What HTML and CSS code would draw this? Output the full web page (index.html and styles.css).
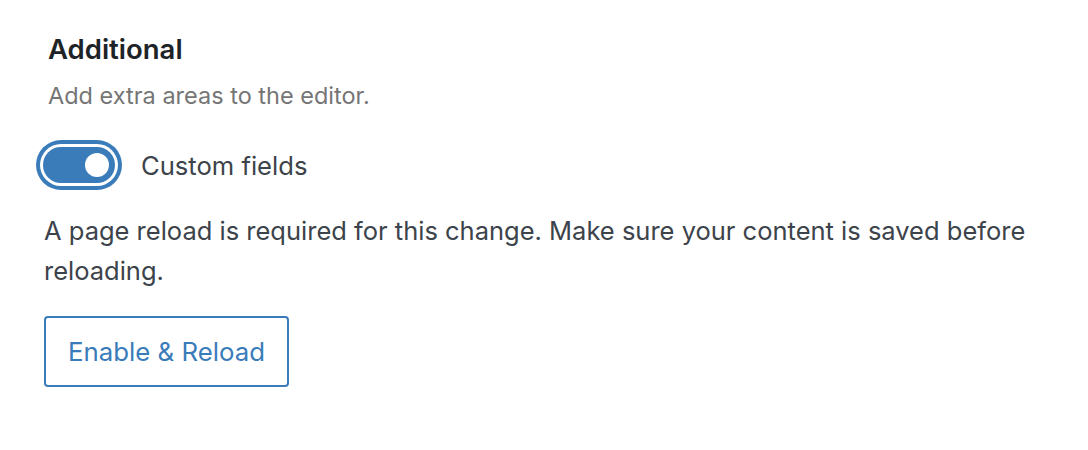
FILE: index.html
```html
<!DOCTYPE html>
<html>
<head>
<meta charset="utf-8">
<link rel="stylesheet" href="styles.css">
</head>
<body>
<div class="panel">
  <h2 class="title">Additional</h2>
  <p class="desc">Add extra areas to the editor.</p>
  <div class="toggle-row">
    <span class="toggle"><span class="thumb"></span></span>
    <span class="toggle-label">Custom fields</span>
  </div>
  <p class="notice">A page reload is required for this change. Make sure your content is saved before reloading.</p>
  <button class="btn">Enable &amp; Reload</button>
</div>
</body>
</html>
```
FILE: styles.css
```css
html, body {
  margin: 0;
  background: #fff;
}
body {
  font-family: Inter, "Noto Sans", sans-serif;
  color: #3c434a;
}
.panel {
  padding: 31px 44px 0 44px;
  width: 1000px;
}
.title {
  margin: 0 0 0 4px;
  font-size: 27.5px;
  font-weight: 600;
  line-height: 36px;
  color: #1d2327;
}
.desc {
  margin: 15px 0 0 4px;
  font-size: 23.5px;
  line-height: 28px;
  color: #757575;
}
.toggle-row {
  display: flex;
  align-items: center;
  margin-top: 37px;
}
.toggle {
  box-sizing: border-box;
  width: 72px;
  height: 36px;
  border-radius: 18px;
  background: #3a7cba;
  box-shadow: 0 0 0 3px #fff, 0 0 0 7px #3a7cba;
  display: flex;
  align-items: center;
  justify-content: flex-end;
  padding-right: 6px;
  margin-left: -1px;
}
.thumb {
  width: 24px;
  height: 24px;
  border-radius: 50%;
  background: #fff;
}
.toggle-label {
  margin-left: 26px;
  font-size: 25.6px;
  color: #3c434a;
}
.notice {
  margin: 28px 0 0 0;
  font-size: 25.5px;
  line-height: 40px;
  color: #3c434a;
}
.btn {
  display: block;
  margin-top: 25px;
  box-sizing: border-box;
  width: 245px;
  height: 71px;
  border: 2px solid #3a7cba;
  border-radius: 4px;
  background: #fff;
  color: #3a7cba;
  font-family: Inter, "Noto Sans", sans-serif;
  font-size: 25.8px;
  padding: 0;
}
```
